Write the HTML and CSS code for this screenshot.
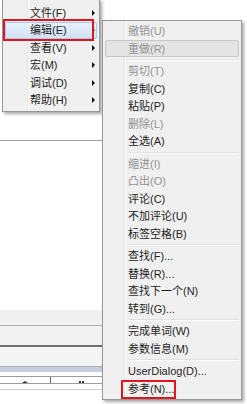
FILE: index.html
```html
<!DOCTYPE html>
<html lang="zh-CN">
<head>
<meta charset="utf-8">
<title>编辑菜单</title>
<link rel="stylesheet" href="styles.css">
</head>
<body>
<div class="screen">
  <div class="bg">
    <div class="editor"></div>
    <div class="blank"></div>
    <div class="band band1"></div>
    <div class="band band2"></div>
    <div class="band band3"></div>
    <div class="band band4"></div>
    <div class="band gap1"></div>
    <div class="band headrow">
      <div class="cell cell1"><span class="sort"></span></div>
      <div class="cell cell2"><span class="dots"></span></div>
    </div>
    <div class="band gap2"></div>
  </div>

  <div class="menu menu-main">
    <div class="item"><span>文件(F)</span><span class="arrow"></span></div>
    <div class="item hot"><span>编辑(E)</span><span class="arrow"></span></div>
    <div class="item"><span>查看(V)</span><span class="arrow"></span></div>
    <div class="item"><span>宏(M)</span><span class="arrow"></span></div>
    <div class="item"><span>调试(D)</span><span class="arrow"></span></div>
    <div class="item"><span>帮助(H)</span><span class="arrow"></span></div>
  </div>

  <div class="menu menu-edit">
    <div class="item off">撤销(U)</div>
    <div class="item off hover">重做(R)</div>
    <div class="sep"></div>
    <div class="item off">剪切(T)</div>
    <div class="item">复制(C)</div>
    <div class="item">粘贴(P)</div>
    <div class="item off">删除(L)</div>
    <div class="item">全选(A)</div>
    <div class="sep"></div>
    <div class="item off">缩进(I)</div>
    <div class="item off">凸出(O)</div>
    <div class="item">评论(C)</div>
    <div class="item">不加评论(U)</div>
    <div class="item">标签空格(B)</div>
    <div class="sep"></div>
    <div class="item">查找(F)...</div>
    <div class="item">替换(R)...</div>
    <div class="item">查找下一个(N)</div>
    <div class="item">转到(G)...</div>
    <div class="sep"></div>
    <div class="item">完成单词(W)</div>
    <div class="item">参数信息(M)</div>
    <div class="sep"></div>
    <div class="item">UserDialog(D)...</div>
    <div class="item">参考(N)...</div>
  </div>

  <div class="mark mark-edit"></div>
  <div class="mark mark-ref"></div>
</div>
</body>
</html>
```

FILE: styles.css
```css
html, body {
  margin: 0;
  padding: 0;
  background: #ffffff;
}

.screen {
  position: relative;
  width: 247px;
  height: 404px;
  overflow: hidden;
  font-family: "Liberation Sans", "Noto Sans CJK SC", sans-serif;
  font-size: 11px;
  color: #1e1e1e;
}

/* background application window */
.bg {
  width: 112px;
  display: flex;
  flex-direction: column;
}

.editor {
  height: 140px;
  border-bottom: 1px solid #a3a3a3;
}

.blank {
  height: 169px;
}

.band1 {
  height: 15px;
  background: #f0f0f0;
  border-bottom: 1px solid #b0b0b0;
}

.band2 {
  height: 19px;
  background: #f2f2f2;
  border-bottom: 2px solid #6f6f6f;
}

.band3 {
  height: 19px;
  background: #f4f4f4;
  border-bottom: 1px solid #ababab;
}

.band4 {
  height: 5px;
  background: #c6d0dc;
}

.gap1 {
  height: 4px;
  border-bottom: 1px solid #9d9d9d;
}

.headrow {
  height: 6px;
  display: flex;
  border-bottom: 1px solid #9d9d9d;
}

.cell {
  display: flex;
  align-items: flex-end;
  justify-content: center;
}

.cell1 {
  width: 54px;
  border-right: 1px solid #6a6a6a;
}

.cell2 {
  width: 66px;
}

.sort {
  width: 0;
  height: 0;
  border-left: 3px solid transparent;
  border-right: 3px solid transparent;
  border-bottom: 2px solid #333;
}

.dots {
  width: 5px;
  height: 2px;
  background: linear-gradient(to right, #333 0 2px, transparent 2px 3px, #333 3px 5px);
}

.gap2 {
  height: 5px;
  border-bottom: 1px solid #cfcfcf;
}

/* menus */
.menu {
  position: absolute;
  box-sizing: border-box;
  border: 1px solid #979797;
  background-color: #f0f0f0;
  box-shadow: 2px 2px 3px rgba(0, 0, 0, 0.35);
  display: flex;
  flex-direction: column;
}

.menu-main {
  left: 2px;
  top: -1px;
  width: 98px;
  padding: 4px 2px 2px;
  background-image: linear-gradient(to right, transparent 24px, #e2e3e3 24px, #e2e3e3 25px, #ffffff 25px, #ffffff 26px, transparent 26px);
}

.menu-edit {
  left: 102px;
  top: 20px;
  width: 140px;
  padding: 1px 2px 2px;
  background-image: linear-gradient(to right, transparent 21px, #e2e3e3 21px, #e2e3e3 22px, #ffffff 22px, #ffffff 23px, transparent 23px);
}

.item {
  box-sizing: border-box;
  height: 17.5px;
  line-height: 16px;
  white-space: nowrap;
  border: 1px solid transparent;
  border-radius: 2px;
}

.menu-main .item {
  display: flex;
  justify-content: space-between;
  align-items: center;
  padding-left: 24px;
  padding-right: 1px;
}

.menu-edit .item {
  padding-left: 22px;
}

.menu-main .item.hot {
  background: linear-gradient(#e6f0fb, #d2e3f6);
  border-color: #a9c9ee;
}

.menu-edit .item.hover {
  background: #e4e4e4;
  border-color: #c6c6c6;
}

.item.off {
  color: #929292;
}

.arrow {
  width: 0;
  height: 0;
  border-left: 3px solid #111;
  border-top: 3px solid transparent;
  border-bottom: 3px solid transparent;
}

.sep {
  height: 5px;
  margin-left: 23px;
  background: linear-gradient(to bottom, transparent 2px, #e0e0e0 2px, #e0e0e0 3px, #ffffff 3px, #ffffff 4px, transparent 4px);
}

/* red annotation boxes */
.mark {
  position: absolute;
  box-sizing: border-box;
  border: 2px solid #e0161e;
}

.mark-edit {
  left: 3px;
  top: 19px;
  width: 91px;
  height: 22px;
}

.mark-ref {
  left: 121px;
  top: 380px;
  width: 55px;
  height: 19px;
}
```
